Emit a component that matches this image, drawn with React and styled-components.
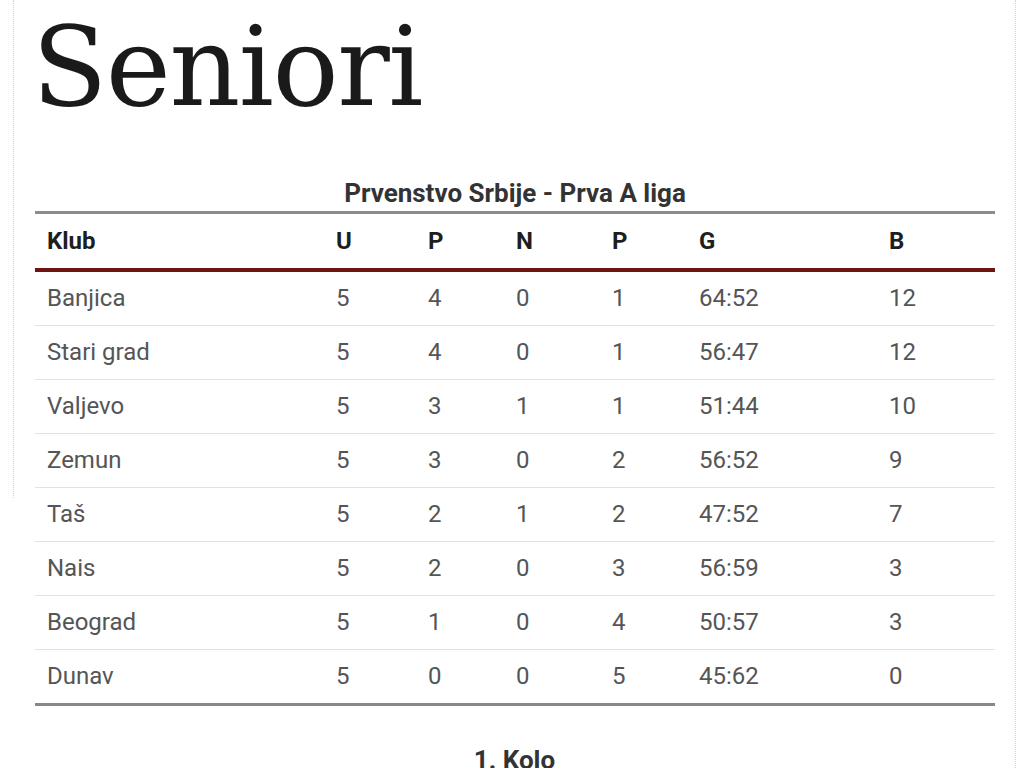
import React from "react";
import styled, { createGlobalStyle } from "styled-components";

const GlobalStyle = createGlobalStyle`
  body {
    margin: 0;
    background: #fff;
    font-family: Roboto, "Liberation Sans", sans-serif;
  }
`;

const rows = [
  ["Banjica", 5, 4, 0, 1, "64:52", 12],
  ["Stari grad", 5, 4, 0, 1, "56:47", 12],
  ["Valjevo", 5, 3, 1, 1, "51:44", 10],
  ["Zemun", 5, 3, 0, 2, "56:52", 9],
  ["Taš", 5, 2, 1, 2, "47:52", 7],
  ["Nais", 5, 2, 0, 3, "56:59", 3],
  ["Beograd", 5, 1, 0, 4, "50:57", 3],
  ["Dunav", 5, 0, 0, 5, "45:62", 0],
];

const widths = [289, 92, 88, 96, 87, 190, 118];

const App = () => {
  return (
    <>
      <GlobalStyle />
      <Page>
        <Title>Seniori</Title>
        <Table>
          <Caption>Prvenstvo Srbije - Prva A liga</Caption>
          <colgroup>
            {widths.map((w, i) => (
              <col key={i} style={{ width: w }} />
            ))}
          </colgroup>
          <thead>
            <tr>
              {["Klub", "U", "P", "N", "P", "G", "B"].map((h, i) => (
                <Th key={i}>{h}</Th>
              ))}
            </tr>
          </thead>
          <tbody>
            {rows.map((r) => (
              <Row key={r[0]}>
                {r.map((c, i) => (
                  <Td key={i}>{c}</Td>
                ))}
              </Row>
            ))}
          </tbody>
        </Table>
        <Round>1. Kolo</Round>
      </Page>
    </>
  );
};

const Page = styled.div`
  position: relative;
  margin-left: 13px;
  width: 1003px;
  padding: 0 21px 0 22px;
  box-sizing: border-box;
  border-right: 1px dotted #d4d4d4;
  min-height: 768px;

  &::before {
    content: "";
    position: absolute;
    left: 0;
    top: 0;
    height: 498px;
    border-left: 1px dotted #d4d4d4;
  }
`;

const Title = styled.h1`
  margin: 0 0 0 -3px;
  padding-top: 4px;
  font-family: "DejaVu Serif", "Liberation Serif", serif;
  font-weight: 400;
  font-size: 110px;
  letter-spacing: -1.5px;
  line-height: 126px;
  color: #1a1a1a;
`;

const Table = styled.table`
  width: 960px;
  margin-top: 47px;
  border-collapse: collapse;
  table-layout: fixed;
  border-bottom: 3px solid #888;
`;

const Caption = styled.caption`
  font-size: 26px;
  font-weight: 700;
  color: #333;
  line-height: 32px;
  padding-bottom: 2px;
`;

const Th = styled.th`
  text-align: left;
  font-size: 24px;
  font-weight: 700;
  color: #1e1e1e;
  padding: 12px 12px;
  line-height: 30px;
  border-top: 3px solid #8c8c8c;
  border-bottom: 4px solid #6e1212;
`;

const Row = styled.tr`
  & + & td {
    border-top: 1px solid #e2e2e2;
  }
`;

const Td = styled.td`
  font-size: 24px;
  color: #555;
  padding: 12px 12px;
  line-height: 29px;
`;

const Round = styled.div`
  margin-top: 38px;
  text-align: center;
  font-size: 26px;
  font-weight: 700;
  color: #333;
  line-height: 32px;
`;

export default App;
